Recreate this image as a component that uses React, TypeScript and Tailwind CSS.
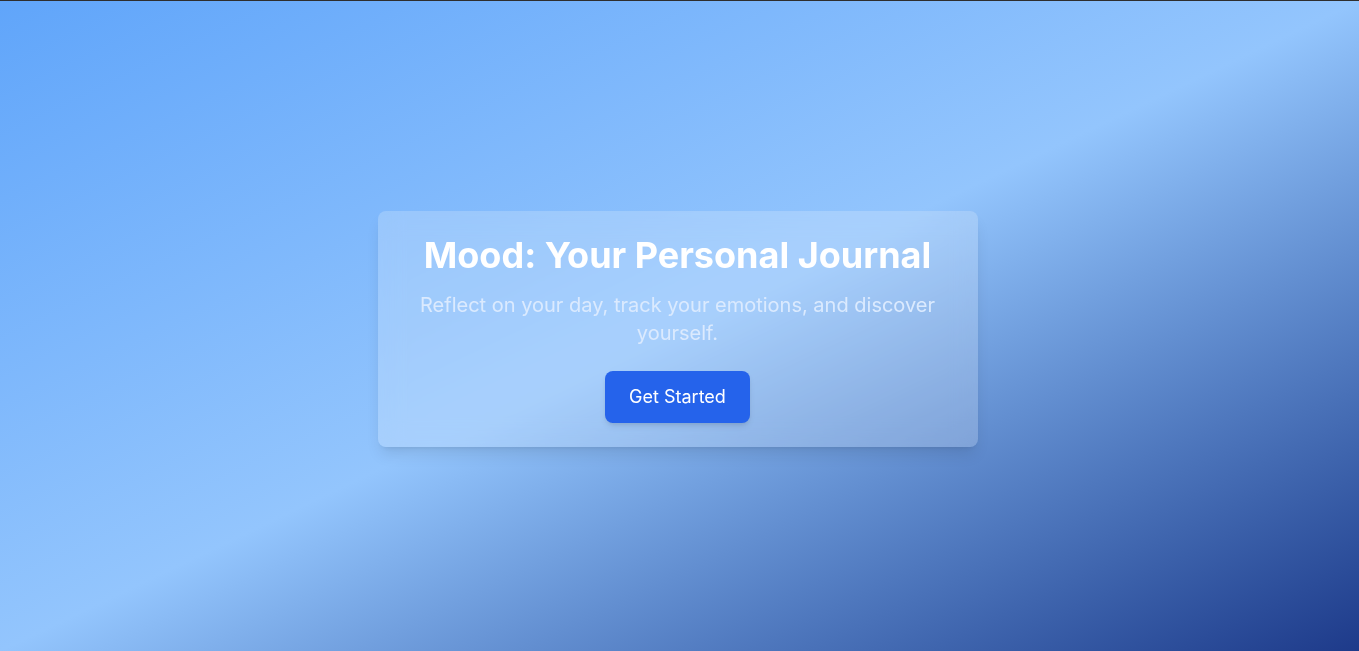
export default function App() {
  return (
    <main
      className="min-h-screen flex items-center justify-center pl-4 pr-5 pt-1.5 bg-gradient-to-br from-[#60a5fa] via-[#93c5fd] to-[#1e3a8a] border-t border-[#2e2e2e]"
      style={{ fontFamily: "Inter, 'Liberation Sans', sans-serif" }}
    >
      <div className="w-full max-w-[600px] bg-white/20 backdrop-blur-md rounded-lg shadow-lg px-8 py-6 text-center">
        <h1 className="text-4xl font-bold text-white mb-4">Mood: Your Personal Journal</h1>
        <p className="text-xl text-[#dbeafe] mb-6">
          Reflect on your day, track your emotions, and discover yourself.
        </p>
        <button className="bg-[#2563eb] text-white text-lg px-6 py-3 rounded-lg shadow-md">
          Get Started
        </button>
      </div>
    </main>
  );
}
